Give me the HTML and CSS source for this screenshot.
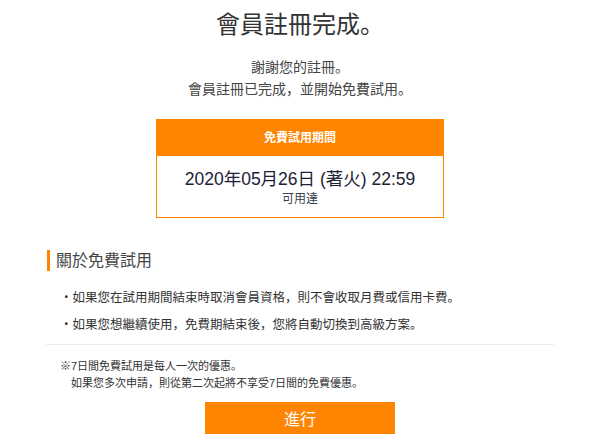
FILE: index.html
```html
<!DOCTYPE html>
<html lang="ja">
    <head>
        <meta charset="UTF-8" />
        <meta name="viewport" content="width=device-width, initial-scale=1.0" />
        <title>會員註冊完成</title>
        <link rel="stylesheet" href="styles.css">
    </head>
    <body>
        <div id="main">
            <h1 class="title">會員註冊完成。</h1>
            <p class="lead">謝謝您的註冊。<br />會員註冊已完成，並開始免費試用。</p>

            <div class="trial">
                <div class="trial-head">免費試用期間</div>
                <div class="trial-body">
                    <div class="trial-date">2020年05月26日 (著火) 22:59</div>
                    <div class="trial-note">可用達</div>
                </div>
            </div>

            <div class="about">
                <h2 class="about-title">關於免費試用</h2>
                <ul class="about-list">
                    <li>・如果您在試用期間結束時取消會員資格，則不會收取月費或信用卡費。</li>
                    <li>・如果您想繼續使用，免費期結束後，您將自動切換到高級方案。</li>
                </ul>
                <div class="notes">
                    <p>※7日間免費試用是每人一次的優惠。</p>
                    <p class="indent">如果您多次申請，則從第二次起將不享受7日間的免費優惠。</p>
                </div>
            </div>

            <button class="next">進行</button>
        </div>
    </body>
</html>
```

FILE: styles.css
```css
* {
    margin: 0;
    padding: 0;
    box-sizing: border-box;
}

body {
    background: #fff;
    color: #333;
    font-family: "Liberation Sans", "Noto Sans CJK JP", sans-serif;
}

#main {
    width: 600px;
    display: flex;
    flex-direction: column;
    align-items: center;
}

.title {
    margin-top: 10px;
    font-size: 24px;
    line-height: 30px;
    font-weight: normal;
    color: #333;
}

.lead {
    margin-top: 16px;
    font-size: 14px;
    line-height: 22px;
    text-align: center;
    color: #444;
}

.trial {
    margin-top: 19px;
    width: 288px;
    border: 1px solid #ff8500;
    text-align: center;
}

.trial-head {
    height: 36px;
    line-height: 36px;
    background-color: #ff8500;
    color: #fff;
    font-size: 12px;
    font-weight: bold;
}

.trial-body {
    padding: 11px 0 10px;
}

.trial-date {
    font-size: 17.5px;
    line-height: 24px;
    color: #1b2236;
}

.trial-note {
    font-size: 12px;
    line-height: 16px;
    color: #3a4150;
}

.about {
    width: 508px;
    margin-top: 32px;
}

.about-title {
    border-left: 3px solid #ff8500;
    margin-left: 1px;
    padding-left: 6px;
    height: 21px;
    line-height: 21px;
    font-size: 16px;
    font-weight: normal;
    color: #444;
}

.about-list {
    list-style: none;
    margin-top: 18px;
    padding-left: 14px;
    font-size: 12.5px;
    color: #333;
}

.about-list li {
    line-height: 18px;
    margin-bottom: 9px;
}

.notes {
    margin-top: 10px;
    border-top: 1px solid #ececec;
    padding: 13px 0 0 14px;
    font-size: 11px;
    line-height: 17px;
    color: #333;
}

.notes .indent {
    padding-left: 11px;
}

.next {
    margin-top: 10px;
    width: 190px;
    height: 32px;
    border: 0;
    background-color: #ff8500;
    color: #fff;
    font-family: "Liberation Sans", "Noto Sans CJK JP", sans-serif;
    font-size: 16px;
}
```
